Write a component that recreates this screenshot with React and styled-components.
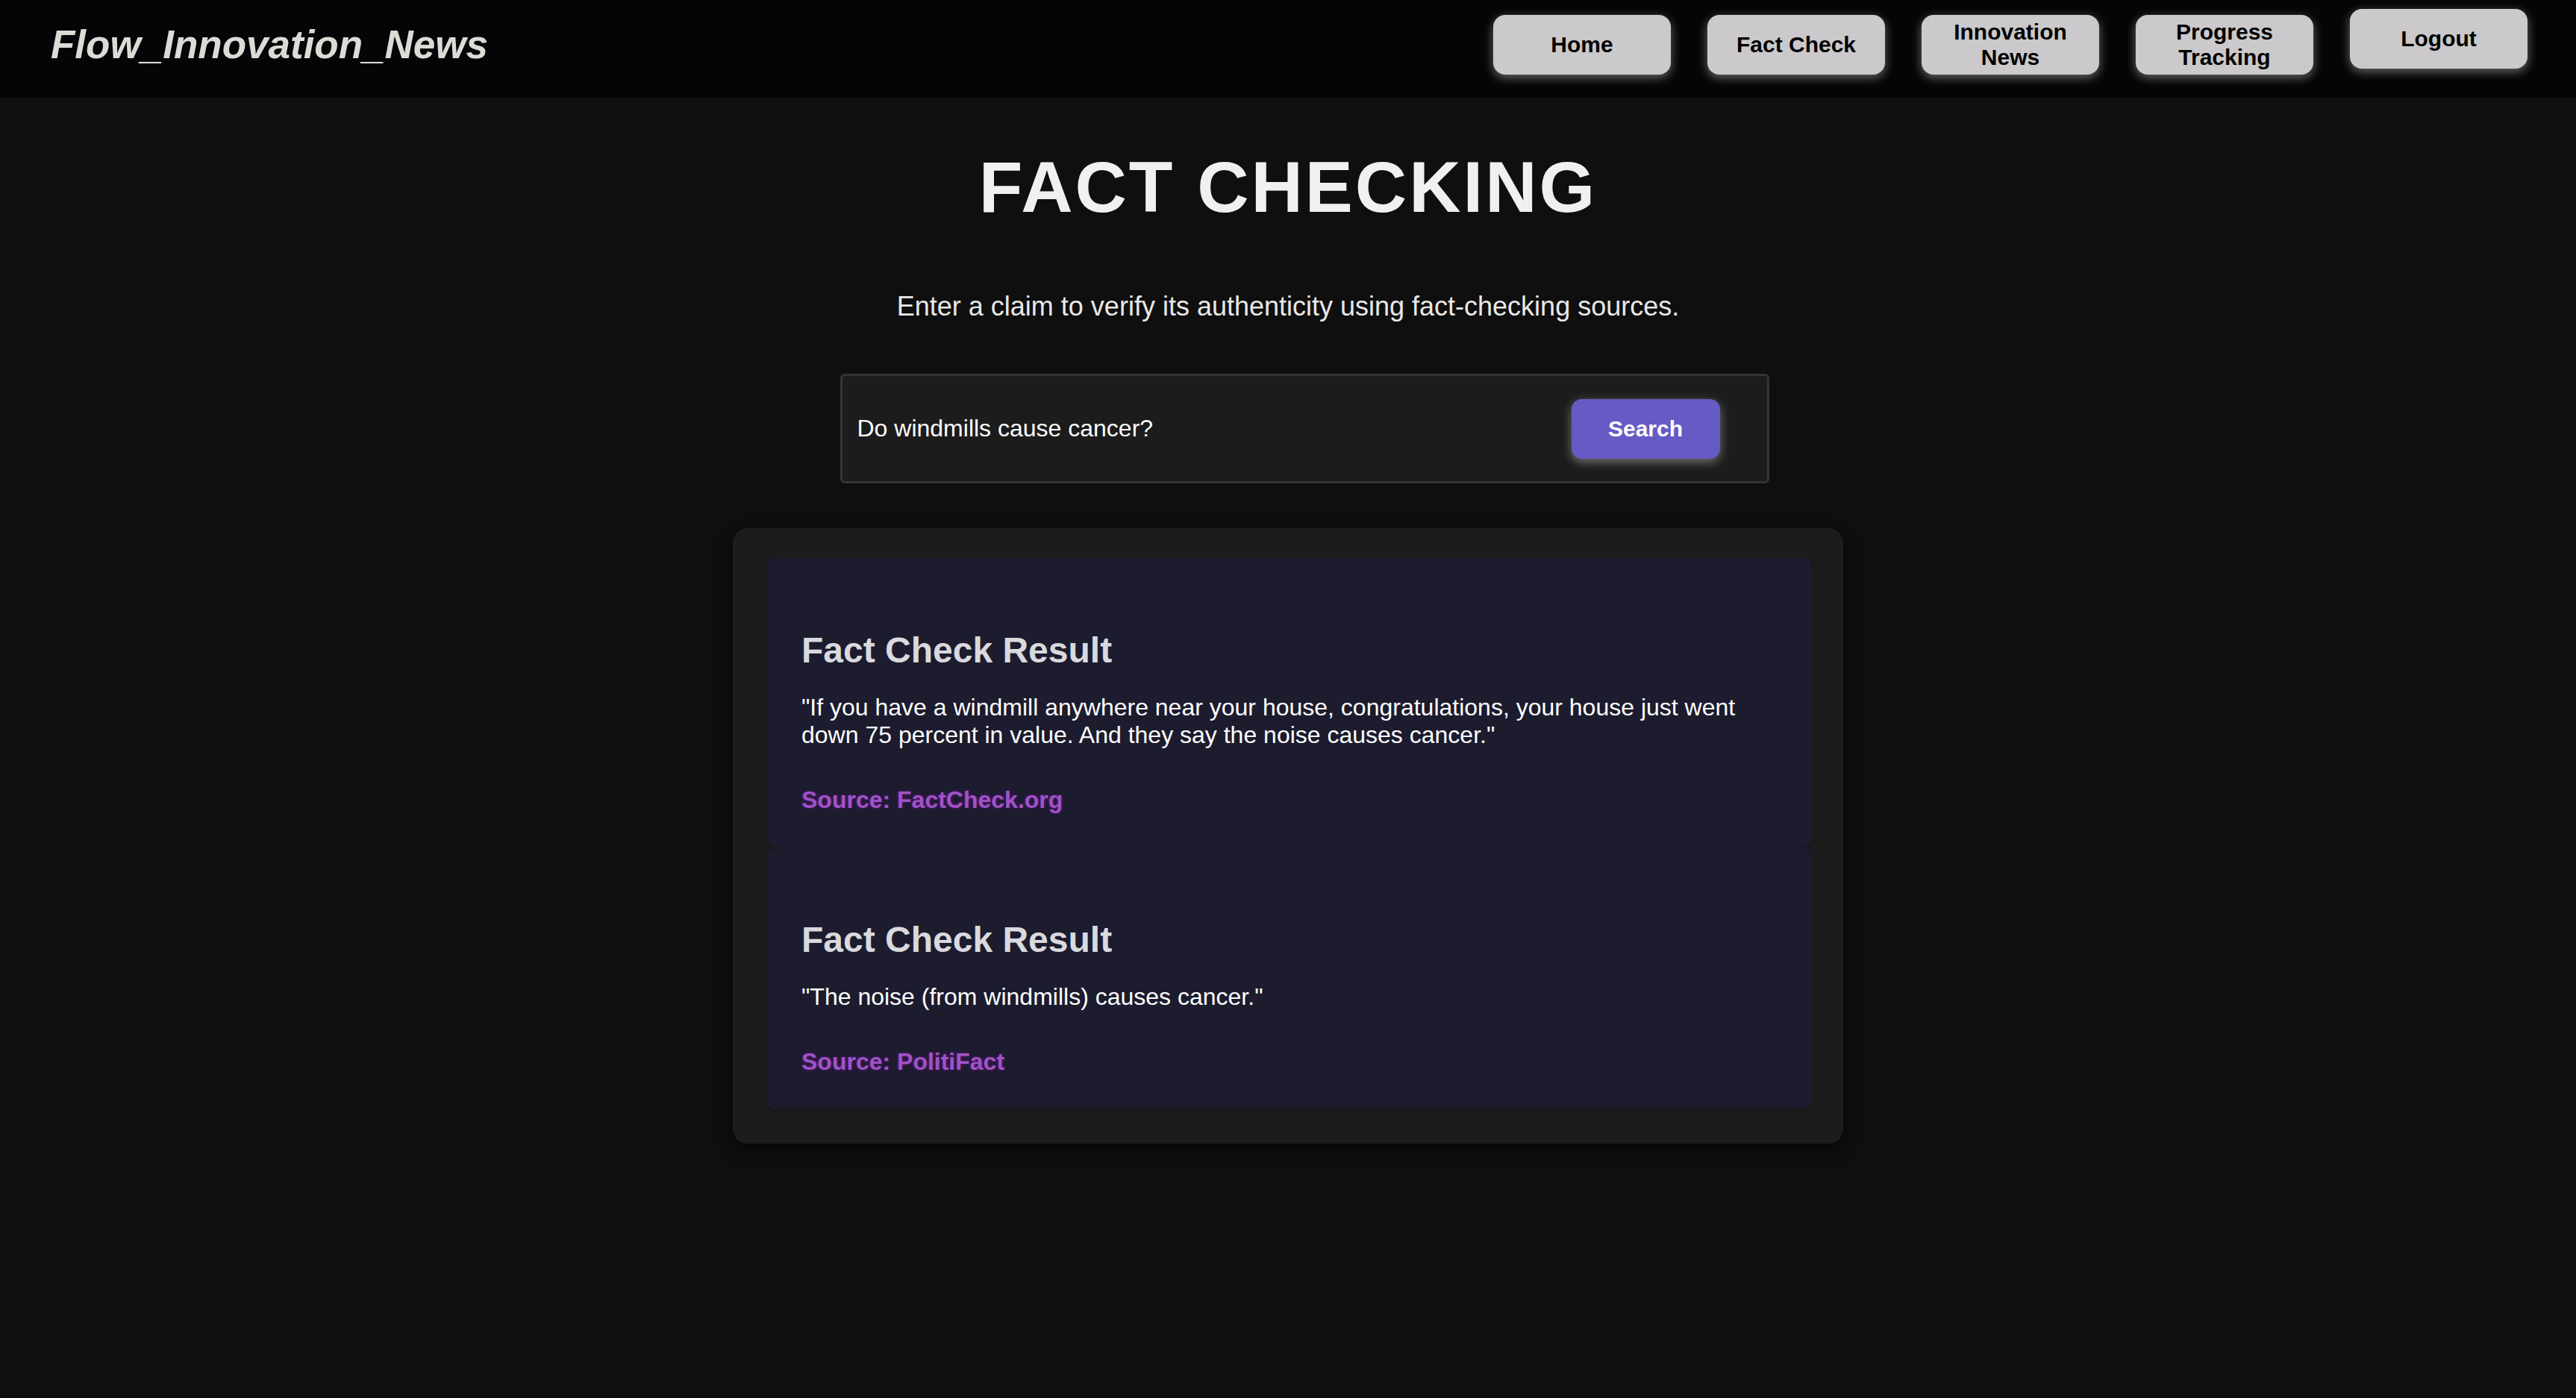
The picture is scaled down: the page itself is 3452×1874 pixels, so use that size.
import React, { useState } from "react"
import styled, { createGlobalStyle } from "styled-components"

const GlobalStyle = createGlobalStyle`
  *{
    box-sizing: border-box;
  }
  body{
    margin: 0;
    background: #0f0f0f;
    font-family: "Liberation Sans", Arial, sans-serif;
    color: #f0f0f0;
    min-height: 100vh;
  }
`

const Header = styled.header`
  height: 131px;
  background: #050508;
  display: flex;
  justify-content: space-between;
  align-items: flex-start;
  padding: 0 65px 0 68px;
`

const Logo = styled.h1`
  margin: 29px 0 0;
  font-size: 53px;
  font-weight: 700;
  font-style: italic;
  color: #dcdcd6;
`

const Nav = styled.nav`
  display: flex;
  gap: 49px;
  padding-top: 20px;
`

const NavButton = styled.button`
  width: 238px;
  height: 80px;
  margin-top: ${p => (p.$raised ? "-8px" : "0")};
  border: none;
  border-radius: 16px;
  background: #cbc9cb;
  color: #000;
  font-family: "Liberation Sans", Arial, sans-serif;
  font-size: 30px;
  font-weight: 700;
  line-height: 1.15;
  box-shadow: 0 4px 14px rgba(255, 255, 255, 0.4);
  cursor: pointer;
`

const Main = styled.main`
  display: flex;
  flex-direction: column;
  align-items: center;
  padding-bottom: 80px;
`

const Title = styled.h2`
  margin: 65px 0 0;
  font-size: 96px;
  font-weight: 700;
  letter-spacing: 3px;
  color: #f0f0f0;
`

const Subtitle = styled.p`
  margin: 84px 0 0;
  font-size: 36px;
  color: #e8e8e8;
`

const SearchBox = styled.form`
  margin: 69px 0 0 44px;
  width: 1245px;
  height: 147px;
  display: flex;
  align-items: center;
  padding: 0 63px 0 20px;
  background: #1c1c1c;
  border: 3px solid #353535;
  border-radius: 6px;
`

const SearchInput = styled.input`
  flex: 1;
  background: transparent;
  border: none;
  outline: none;
  color: #fff;
  font-family: "Liberation Sans", Arial, sans-serif;
  font-size: 32px;
  padding: 0;
`

const SearchButton = styled.button`
  width: 199px;
  height: 80px;
  border: none;
  border-radius: 14px;
  background: #665bc4;
  color: #fff;
  font-family: "Liberation Sans", Arial, sans-serif;
  font-size: 30px;
  font-weight: 700;
  box-shadow: 0 4px 14px rgba(255, 255, 255, 0.4);
  cursor: pointer;
`

const Results = styled.section`
  margin-top: 60px;
  width: 1488px;
  padding: 40px 42px 46px 46px;
  background: #1c1c1c;
  border-radius: 20px;
  box-shadow: 0 8px 20px rgba(0, 0, 0, 0.6);
  display: flex;
  flex-direction: column;
`

const Card = styled.article`
  background: #1c1c2e;
  border-radius: 12px;
  padding: 46px 46px 45px;
  box-shadow: 0 2px 4px rgba(0, 0, 0, 0.25);
`

const CardTitle = styled.h3`
  margin: 50px 0 31px;
  font-size: 48px;
  font-weight: 700;
  color: #d9d9de;
`

const Quote = styled.p`
  margin: 0 0 50px;
  font-size: 32px;
  color: #fff;
`

const Source = styled.p`
  margin: 0;
  font-size: 32px;
  font-weight: 700;
  color: #a053c4;
  text-shadow: 0 0 4px #5e1580;
`

const results = [
  {
    quote: "\"If you have a windmill anywhere near your house, congratulations, your house just went down 75 percent in value. And they say the noise causes cancer.\"",
    source: "FactCheck.org",
  },
  {
    quote: "\"The noise (from windmills) causes cancer.\"",
    source: "PolitiFact",
  },
]

export default function App() {
  const [claim, setClaim] = useState("Do windmills cause cancer?")

  return (
    <>
      <GlobalStyle />
      <Header>
        <Logo>Flow_Innovation_News</Logo>
        <Nav>
          <NavButton>Home</NavButton>
          <NavButton>Fact Check</NavButton>
          <NavButton>Innovation<br />News</NavButton>
          <NavButton>Progress<br />Tracking</NavButton>
          <NavButton $raised>Logout</NavButton>
        </Nav>
      </Header>
      <Main>
        <Title>FACT CHECKING</Title>
        <Subtitle>Enter a claim to verify its authenticity using fact-checking sources.</Subtitle>
        <SearchBox onSubmit={e => e.preventDefault()}>
          <SearchInput value={claim} onChange={e => setClaim(e.target.value)} />
          <SearchButton type="submit">Search</SearchButton>
        </SearchBox>
        <Results>
          {results.map((r, i) => (
            <Card key={i}>
              <CardTitle>Fact Check Result</CardTitle>
              <Quote>{r.quote}</Quote>
              <Source>Source: {r.source}</Source>
            </Card>
          ))}
        </Results>
      </Main>
    </>
  )
}
